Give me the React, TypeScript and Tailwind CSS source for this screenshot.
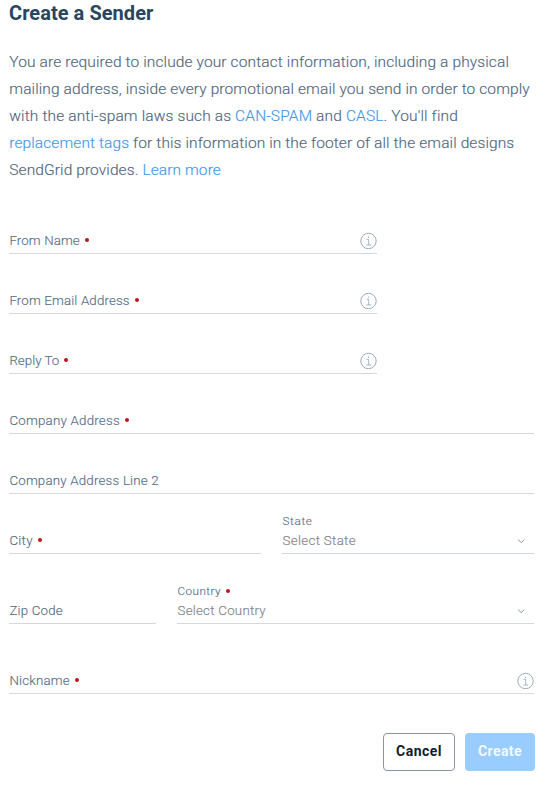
import type { ReactNode } from "react";

function InfoIcon() {
  return (
    <svg className="block h-[17px] w-[17px] shrink-0" viewBox="0 0 17 17" fill="none" stroke="#93a3b4">
      <circle cx="8.5" cy="9" r="7.7" strokeWidth="0.9" />
      <path d="M6.6 7.4H8.7V13M6.2 13H11.2" strokeWidth="0.8" />
      <circle cx="8.5" cy="5.1" r="0.7" fill="#93a3b4" stroke="none" />
    </svg>
  );
}

function Chevron() {
  return (
    <svg className="mr-[9px] block h-[8px] w-[8px] shrink-0" viewBox="0 0 8 8" fill="none" stroke="#8495a7" strokeWidth="1">
      <path d="M1.1 2.6L4.2 5.6L7.3 2.6" />
    </svg>
  );
}

function Dot() {
  return <span className="mb-px ml-[5px] block h-1 w-1 shrink-0 rounded-full bg-[#b7191c]" />;
}

type FieldProps = {
  label: string;
  tracking: string;
  required?: boolean;
  info?: boolean;
  className?: string;
};

function Field({ label, tracking, required, info, className = "w-[525px]" }: FieldProps) {
  return (
    <div className={`flex h-[60px] flex-col justify-end border-b border-[#d5d9de] ${className}`}>
      <div className="flex h-[25px] items-center">
        <span className={`pl-[0.4px] text-[13.3px] leading-5 whitespace-nowrap ${tracking}`}>{label}</span>
        {required && <Dot />}
        <span className="grow" />
        {info && <InfoIcon />}
      </div>
    </div>
  );
}

type SelectProps = {
  label: string;
  value: string;
  labelTracking: string;
  tracking: string;
  required?: boolean;
  className: string;
};

function SelectField({ label, value, labelTracking, tracking, required, className }: SelectProps) {
  return (
    <div className={`flex h-[60px] flex-col justify-end border-b border-[#d2dae3] ${className}`}>
      <div className="flex h-[14px] items-center">
        <span className={`pl-[0.5px] text-[11.7px] leading-[14px] whitespace-nowrap ${labelTracking}`}>{label}</span>
        {required && <Dot />}
      </div>
      <div className="flex h-[25px] items-center justify-between">
        <span className={`pl-[0.5px] text-[13.3px] leading-5 whitespace-nowrap text-[#858585] ${tracking}`}>{value}</span>
        <Chevron />
      </div>
    </div>
  );
}

function Line({ tracking, children }: { tracking: string; children: ReactNode }) {
  return <span className={`block whitespace-nowrap ${tracking}`}>{children}</span>;
}

function Link({ children }: { children: ReactNode }) {
  return <a className="text-[#3f97e6]">{children}</a>;
}

export default function App() {
  return (
    <main className="h-[787px] w-[546px] overflow-hidden bg-white pl-[9px] font-['Roboto',sans-serif] font-light text-[#587089] [-webkit-text-stroke:0.15px]">
      <h1 className="h-[49px] pt-[1px] text-[20px] leading-6 font-bold tracking-[0.05px] text-[#294661] [-webkit-text-stroke:0px]">Create a Sender</h1>
      <p className="h-[145px] pl-[0.3px] text-[15.5px] leading-[27px] text-[#4f667d]">
        <Line tracking="tracking-[0.12px]">You are required to include your contact information, including a physical</Line>
        <Line tracking="tracking-[0.11px]">mailing address, inside every promotional email you send in order to comply</Line>
        <Line tracking="tracking-[0.135px]">
          with the anti-spam laws such as <Link>CAN-SPAM</Link> and <Link>CASL</Link>. You'll find
        </Line>
        <Line tracking="tracking-[0.1px]">
          <Link>replacement tags</Link> for this information in the footer of all the email designs
        </Line>
        <Line tracking="tracking-[0.1px]">
          SendGrid provides. <Link>Learn more</Link>
        </Line>
      </p>
      <form>
        <Field label="From Name" tracking="tracking-[0.12px]" required info className="w-[368px]" />
        <Field label="From Email Address" tracking="tracking-[0.15px]" required info className="w-[368px]" />
        <Field label="Reply To" tracking="tracking-[0.02px]" required info className="w-[368px]" />
        <Field label="Company Address" tracking="tracking-[0.23px]" required />
        <Field label="Company Address Line 2" tracking="tracking-[0.2px]" />
        <div className="flex gap-[21px]">
          <Field label="City" tracking="tracking-[0.3px]" required className="w-[252px]" />
          <SelectField label="State" value="Select State" labelTracking="tracking-[0.65px]" tracking="tracking-[0.33px]" className="w-[252px]" />
        </div>
        <div className="mt-[10px] flex gap-[21px]">
          <Field label="Zip Code" tracking="tracking-[0.2px]" className="w-[147px]" />
          <SelectField label="Country" value="Select Country" labelTracking="tracking-[0.45px]" tracking="tracking-[0.25px]" required className="w-[357px]" />
        </div>
        <div className="mt-[10px]">
          <Field label="Nickname" tracking="tracking-[0.2px]" required info />
        </div>
        <div className="mt-[39px] flex gap-[10px] pl-[374px] [-webkit-text-stroke:0px]">
          <button type="button" className="h-[38px] w-[72px] rounded-[4px] border border-[#8a94ae] pb-[2px] text-[14px] font-bold tracking-[0.45px] text-[#121c2d]">
            Cancel
          </button>
          <button type="button" className="h-[38px] w-[70px] rounded-[4px] bg-[#99cdff] pb-[2px] text-[14px] font-bold tracking-[0.4px] text-[#f4f9ff]">
            Create
          </button>
        </div>
      </form>
    </main>
  );
}
